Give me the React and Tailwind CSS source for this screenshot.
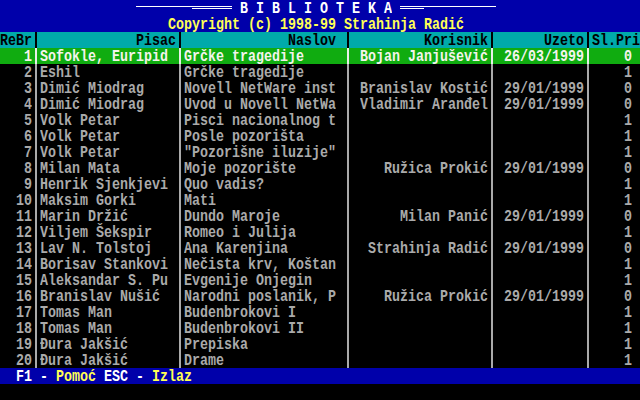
import React from "react";

const rows = [
  ["1", "Sofokle, Euripid", "Grčke tragedije", "Bojan Janjušević", "26/03/1999", "0"],
  ["2", "Eshil", "Grčke tragedije", "", "", "1"],
  ["3", "Dimić Miodrag", "Novell NetWare inst", "Branislav Kostić", "29/01/1999", "0"],
  ["4", "Dimić Miodrag", "Uvod u Novell NetWa", "Vladimir Aranđel", "29/01/1999", "0"],
  ["5", "Volk Petar", "Pisci nacionalnog t", "", "", "1"],
  ["6", "Volk Petar", "Posle pozorišta", "", "", "1"],
  ["7", "Volk Petar", "\"Pozorišne iluzije\"", "", "", "1"],
  ["8", "Milan Mata", "Moje pozorište", "Ružica Prokić", "29/01/1999", "0"],
  ["9", "Henrik Sjenkjevi", "Quo vadis?", "", "", "1"],
  ["10", "Maksim Gorki", "Mati", "", "", "1"],
  ["11", "Marin Držić", "Dundo Maroje", "Milan Panić", "29/01/1999", "0"],
  ["12", "Viljem Šekspir", "Romeo i Julija", "", "", "1"],
  ["13", "Lav N. Tolstoj", "Ana Karenjina", "Strahinja Radić", "29/01/1999", "0"],
  ["14", "Borisav Stankovi", "Nečista krv, Koštan", "", "", "1"],
  ["15", "Aleksandar S. Pu", "Evgenije Onjegin", "", "", "1"],
  ["16", "Branislav Nušić", "Narodni poslanik, P", "Ružica Prokić", "29/01/1999", "0"],
  ["17", "Tomas Man", "Budenbrokovi I", "", "", "1"],
  ["18", "Tomas Man", "Budenbrokovi II", "", "", "1"],
  ["19", "Đura Jakšić", "Prepiska", "", "", "1"],
  ["20", "Đura Jakšić", "Drame", "", "", "1"],
];

const grid =
  "grid grid-cols-[32px_8px_136px_8px_160px_8px_136px_8px_88px_8px_48px] h-4";

function T({ children, className = "" }) {
  return (
    <span
      className={
        "inline-block leading-[13px] scale-y-[1.18] whitespace-pre " + className
      }
    >
      {children}
    </span>
  );
}

function Sep({ color }) {
  return (
    <div className="flex justify-center h-4">
      <div className={"w-[2px] h-full " + color} />
    </div>
  );
}

const L = "flex items-center justify-start h-4";
const R = "flex items-center justify-end h-4";

function Row({ r, hl }) {
  const sep = hl ? "bg-[#e8f0e8]" : "bg-[#aaaaaa]";
  return (
    <div
      className={
        grid +
        (hl ? " bg-[#10ac10] text-[#f4f4ec]" : " bg-black text-[#aaaaaa]")
      }
    >
      <div className={R}><T>{r[0]}</T></div>
      <Sep color={sep} />
      <div className={L}><T>{r[1]}</T></div>
      <Sep color={sep} />
      <div className={L}><T>{r[2]}</T></div>
      <Sep color={sep} />
      <div className={R}><T>{r[3]}</T></div>
      <Sep color={sep} />
      <div className={R}><T>{r[4]}</T></div>
      <Sep color={sep} />
      <div className={R + " pr-2"}><T>{r[5]}</T></div>
    </div>
  );
}

export default function App() {
  return (
    <div className="w-[640px] h-[400px] bg-black overflow-hidden font-['Liberation_Mono',monospace] font-bold text-[13.333px] leading-4">
      {/* title */}
      <div className="h-4 bg-[#0000aa] flex pl-[136px] gap-2">
        <div className="w-[96px] h-4 flex flex-col pt-[6px]">
          <div className="h-px w-full bg-white" />
          <div className="h-px w-[40px] ml-[56px] mt-px bg-white" />
        </div>
        <div className={L + " w-[152px] text-white"}><T>B I B L I O T E K A</T></div>
        <div className="w-[96px] h-4 flex flex-col pt-[6px]">
          <div className="h-px w-full bg-white" />
          <div className="h-px w-[24px] mt-px bg-white" />
        </div>
      </div>
      {/* copyright */}
      <div className={L + " bg-[#0000aa] pl-[168px] text-[#ffff55]"}>
        <T>Copyright (c) 1998-99 Strahinja Radić</T>
      </div>
      {/* header */}
      <div className={grid + " bg-[#00aaaa] text-black"}>
        <div className={L}><T>ReBr</T></div>
        <Sep color="bg-black" />
        <div className={R}><T>Pisac</T></div>
        <Sep color="bg-black" />
        <div className={R + " pr-2"}><T>Naslov</T></div>
        <Sep color="bg-black" />
        <div className={R}><T>Korisnik</T></div>
        <Sep color="bg-black" />
        <div className={R}><T>Uzeto</T></div>
        <Sep color="bg-black" />
        <div className={L}><T>Sl.Pri</T></div>
      </div>
      {rows.map((r, i) => (
        <Row key={i} r={r} hl={i === 0} />
      ))}
      {/* status */}
      <div className={L + " bg-[#0000aa] pl-4 text-white"}>
        <T>F1 - </T>
        <T className="text-[#ffff55]">Pomoć</T>
        <T> ESC - </T>
        <T className="text-[#ffff55]">Izlaz</T>
      </div>
      <div className="h-4 bg-black" />
    </div>
  );
}
